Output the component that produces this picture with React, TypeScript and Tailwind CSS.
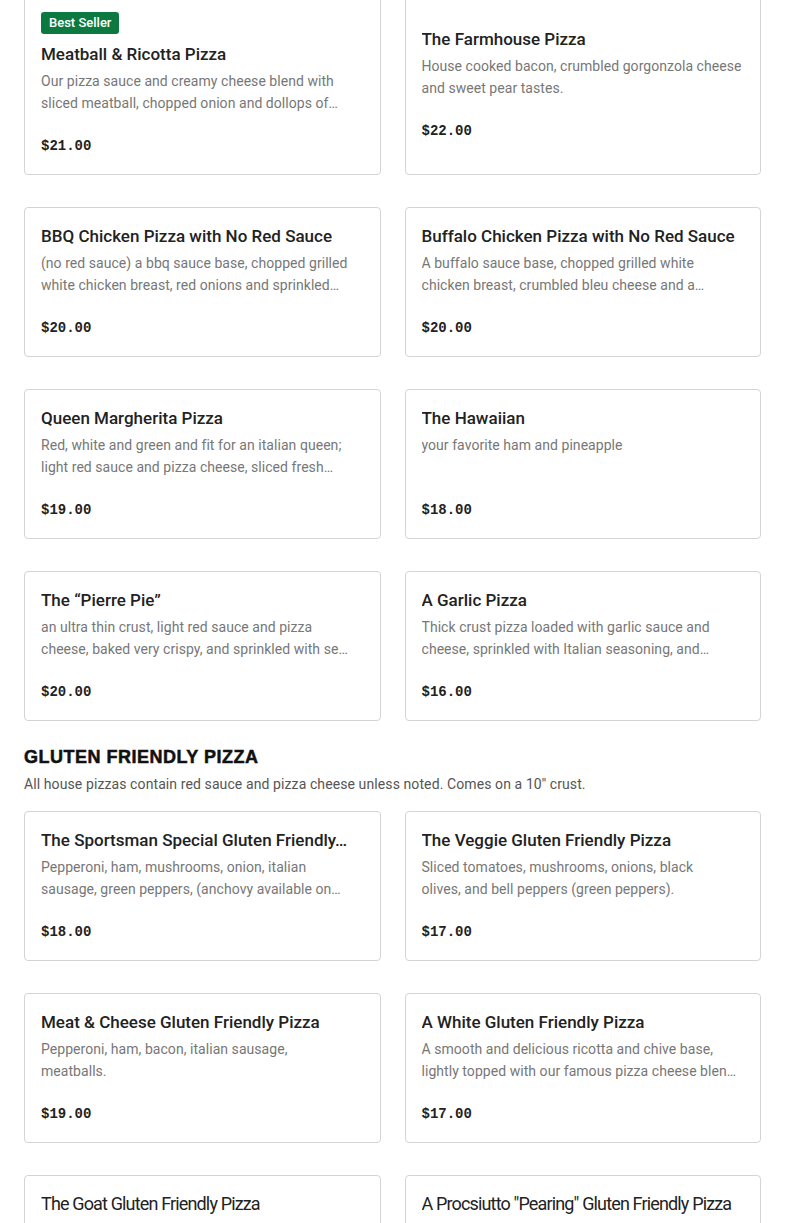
import React from 'react';

type Item = {
  name: string;
  lines: string[];
  price: string;
  badge?: string;
  narrow?: boolean;
};

// descriptions are kept as the two lines the menu shows, cut where the card cuts them
const house: Item[] = [
  {
    name: 'Meatball & Ricotta Pizza',
    lines: ['Our pizza sauce and creamy cheese blend with', 'sliced meatball, chopped onion and dollops of\u2026'],
    price: '$21.00',
    badge: 'Best Seller',
  },
  {
    name: 'The Farmhouse Pizza',
    lines: ['House cooked bacon, crumbled gorgonzola cheese', 'and sweet pear tastes.'],
    price: '$22.00',
  },
  {
    name: 'BBQ Chicken Pizza with No Red Sauce',
    lines: ['(no red sauce) a bbq sauce base, chopped grilled', 'white chicken breast, red onions and sprinkled\u2026'],
    price: '$20.00',
  },
  {
    name: 'Buffalo Chicken Pizza with No Red Sauce',
    lines: ['A buffalo sauce base, chopped grilled white', 'chicken breast, crumbled bleu cheese and a\u2026'],
    price: '$20.00',
  },
  {
    name: 'Queen Margherita Pizza',
    lines: ['Red, white and green and fit for an italian queen;', 'light red sauce and pizza cheese, sliced fresh\u2026'],
    price: '$19.00',
  },
  {
    name: 'The Hawaiian',
    lines: ['your favorite ham and pineapple'],
    price: '$18.00',
  },
  {
    name: 'The \u201cPierre Pie\u201d',
    lines: ['an ultra thin crust, light red sauce and pizza', 'cheese, baked very crispy, and sprinkled with se\u2026'],
    price: '$20.00',
  },
  {
    name: 'A Garlic Pizza',
    lines: ['Thick crust pizza loaded with garlic sauce and', 'cheese, sprinkled with Italian seasoning, and\u2026'],
    price: '$16.00',
  },
];

const glutenFriendly: Item[] = [
  {
    name: 'The Sportsman Special Gluten Friendly\u2026',
    lines: ['Pepperoni, ham, mushrooms, onion, italian', 'sausage, green peppers, (anchovy available on\u2026'],
    price: '$18.00',
  },
  {
    name: 'The Veggie Gluten Friendly Pizza',
    lines: ['Sliced tomatoes, mushrooms, onions, black', 'olives, and bell peppers (green peppers).'],
    price: '$17.00',
  },
  {
    name: 'Meat & Cheese Gluten Friendly Pizza',
    lines: ['Pepperoni, ham, bacon, italian sausage,', 'meatballs.'],
    price: '$19.00',
  },
  {
    name: 'A White Gluten Friendly Pizza',
    lines: ['A smooth and delicious ricotta and chive base,', 'lightly topped with our famous pizza cheese blen\u2026'],
    price: '$17.00',
  },
  {
    name: 'The Goat Gluten Friendly Pizza',
    lines: ['Goat cheese, roasted red peppers and fresh', 'spinach.'],
    price: '$19.00',
    narrow: true,
  },
  {
    name: 'A Procsiutto "Pearing" Gluten Friendly Pizza',
    lines: ['Prosciutto, sliced pear, gorgonzola and a', 'balsamic drizzle.'],
    price: '$21.00',
    narrow: true,
  },
];

function MenuCard({ item }: { item: Item }) {
  return (
    <div className="flex flex-col justify-center rounded-[4px] border border-[#d4d4d4] bg-white p-4">
      {item.badge && (
        <span className="mb-2 inline-flex h-[22px] w-fit items-center rounded-[3px] bg-[#0c7a40] px-2 text-[13px] font-medium text-white">
          {item.badge}
        </span>
      )}
      <h3
        className={
          item.narrow
            ? 'truncate text-[18px] font-normal leading-6 tracking-[-0.85px] text-[#222]'
            : 'truncate text-[17px] font-medium leading-6 text-[#222]'
        }
      >
        {item.name}
      </h3>
      <div className="mt-1 min-h-[44px] text-[14px] leading-[22px] tracking-[0.05px] text-[#777]">
        {item.lines.map((line, i) => (
          <p key={i} className="truncate">
            {line}
          </p>
        ))}
      </div>
      <p className="mt-[20px] font-['Liberation_Mono',monospace] text-[14px] font-bold leading-6 text-[#222]">
        {item.price}
      </p>
    </div>
  );
}

export default function App() {
  return (
    <main className="-mt-[5px] bg-white px-6 pb-10 font-['Roboto',sans-serif]">
      {/* House pizzas */}
      <div className="grid grid-cols-2 gap-x-6 gap-y-8">
        {house.map((item) => (
          <MenuCard key={item.name} item={item} />
        ))}
      </div>

      {/* Gluten friendly */}
      <h2 className="mt-6 font-['Liberation_Sans',sans-serif] text-[18px] font-black uppercase leading-6 tracking-[0.5px] text-[#111] [-webkit-text-stroke:0.5px_#111]">
        Gluten Friendly Pizza
      </h2>
      <p className="mt-1 text-[14px] leading-[22px] tracking-[0.1px] text-[#555]">
        All house pizzas contain red sauce and pizza cheese unless noted. Comes on a 10&apos;&apos; crust.
      </p>
      <div className="mt-[16px] grid grid-cols-2 gap-x-6 gap-y-8">
        {glutenFriendly.map((item) => (
          <MenuCard key={item.name} item={item} />
        ))}
      </div>
    </main>
  );
}
